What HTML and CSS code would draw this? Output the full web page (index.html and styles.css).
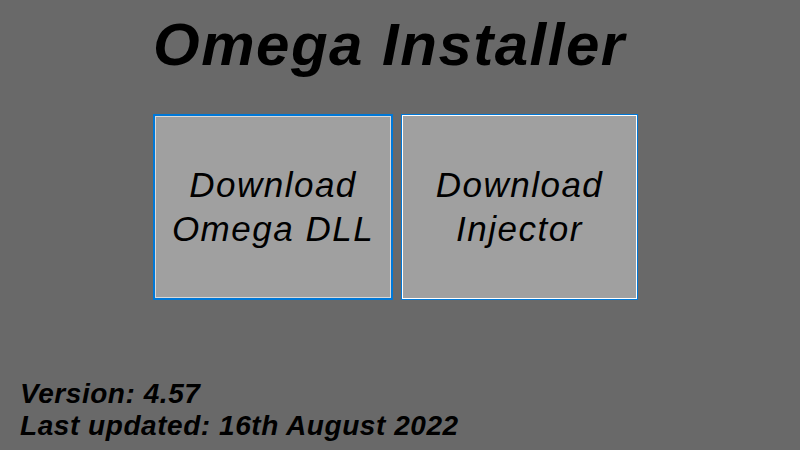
FILE: index.html
```html
<!DOCTYPE html>
<html>
<head>
<meta charset="utf-8">
<link rel="stylesheet" href="styles.css">
</head>
<body>
<div class="app">
  <h1 class="title">Omega Installer</h1>
  <div class="buttons">
    <button class="btn btn-focus">Download<br>Omega DLL</button>
    <button class="btn btn-plain">Download<br>Injector</button>
  </div>
  <div class="footer">
    <div class="line">Version: 4.57</div>
    <div class="line">Last updated: 16th August 2022</div>
  </div>
</div>
</body>
</html>
```
FILE: styles.css
```css
html, body {
  margin: 0;
  padding: 0;
  background: #696969;
}
.app {
  width: 800px;
  height: 450px;
  display: flex;
  flex-direction: column;
  font-family: "Liberation Sans", Arial, sans-serif;
  color: #000;
  box-sizing: border-box;
}
.title {
  margin: 10px 0 0 0;
  padding-left: 153px;
  font-size: 60px;
  line-height: 70px;
  font-weight: bold;
  font-style: italic;
  letter-spacing: 1.5px;
}
.buttons {
  margin-top: 34px;
  padding-left: 153px;
  display: flex;
  gap: 8px;
}
.btn {
  height: 186px;
  background: #a0a0a0;
  font-family: "Liberation Sans", Arial, sans-serif;
  font-size: 35px;
  line-height: 44px;
  font-style: italic;
  letter-spacing: 1.5px;
  color: #000;
  padding: 0;
  margin: 0;
  box-sizing: border-box;
  display: flex;
  align-items: center;
  justify-content: center;
  text-align: center;
}
.btn-focus {
  width: 240px;
  border: 2px solid #0078d7;
  box-shadow: inset 0 0 0 1px #d9d9d9;
}
.btn-plain {
  width: 237px;
  border: 1px solid #0078d7;
  box-shadow: inset 0 0 0 1px #ffffff;
}
.footer {
  margin-top: auto;
  padding: 0 0 8px 20px;
  font-size: 28px;
  line-height: 32px;
  font-weight: bold;
  font-style: italic;
  letter-spacing: 0.55px;
}
```
